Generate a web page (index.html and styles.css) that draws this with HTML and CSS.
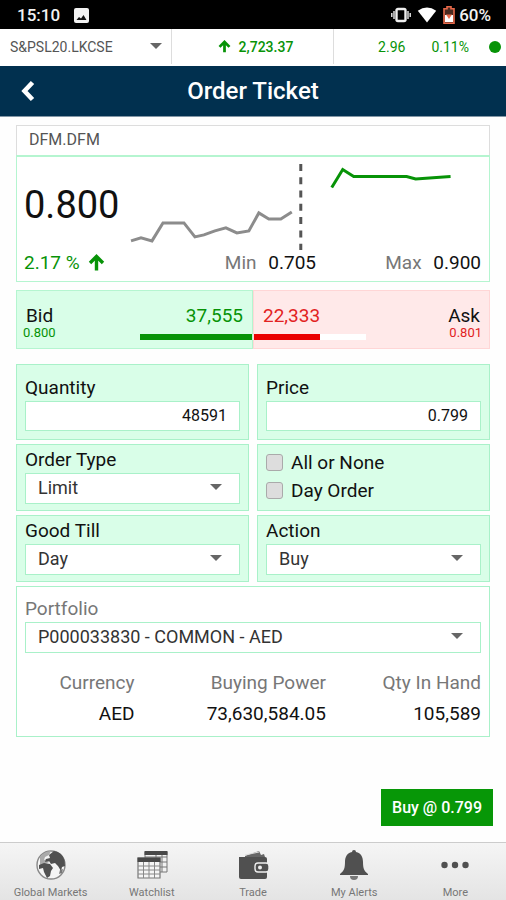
FILE: index.html
```html
<!DOCTYPE html>
<html lang="en">
<head>
<meta charset="utf-8">
<meta name="viewport" content="width=device-width, initial-scale=1">
<title>Order Ticket</title>
<link rel="stylesheet" href="styles.css">
</head>
<body>
<div class="status">
  <span class="clock">15:10</span>
  <svg class="status-photo" width="15" height="15" viewBox="0 0 15 15"><rect width="15" height="15" rx="2" fill="#f2f2f2"/><path d="M2.500 12l2.500-3 2 1.500 2.500-3.500 3 5z" fill="#111"/></svg>
  <span class="status-icons">
    <svg width="20" height="16" viewBox="0 0 20 16"><rect x="5.500" y="2" width="9" height="12" rx="1.500" fill="none" stroke="#eee" stroke-width="2.400"/><path d="M3 4v8M17 4v8M.8 6v4M19.200 6v4" stroke="#ddd" stroke-width="1.500"/></svg>
    <svg width="20" height="16" viewBox="0 0 20 16"><path d="M10 15.500L.8 3.800Q10-2.600 19.200 3.800z" fill="#fff"/></svg>
    <svg width="12" height="18" viewBox="0 0 12 18"><path d="M4 .8h4v2h3v14.400H1V2.800h3z" fill="#4a2a20" stroke="#e8694a" stroke-width="1.600"/><path d="M2 9h8v7H2z" fill="#fff"/><path d="M3 8.500h6L6 13z" fill="#e8694a"/></svg>
    <span class="battery">60%</span>
  </span>
</div>

<div class="ticker">
  <div class="pick pick-plain">
    <select aria-label="Index"><option>S&amp;PSL20.LKCSE</option></select>
  </div>
  <div class="ticker-value">
    <svg width="13" height="13" viewBox="0 0 17 17"><path d="M8.500 16V3M2 9l6.500-6.500L15 9" fill="none" stroke="#079307" stroke-width="3.600"/></svg>
    <span>2,723.37</span>
  </div>
  <div class="ticker-change"><span>2.96</span><span>0.11%</span><i class="dot"></i></div>
</div>

<header class="bar">
  <button class="back" aria-label="Back"><svg width="16" height="22" viewBox="0 0 16 22"><path d="M12.500 2.500L4.500 11l8 8.500" fill="none" stroke="#fff" stroke-width="4.600"/></svg></button>
  <h1>Order Ticket</h1>
</header>

<main>
  <div class="symbol">DFM.DFM</div>
  <section class="quote">
    <div class="quote-top">
      <strong class="last">0.800</strong>
      <svg class="chart" viewBox="0 0 351 90" role="img" aria-label="Price chart">
        <path d="M1 81l10-3 11 3 11-18h21l11 14 9-2 11-4 11-3 11 5 12-2 10-18 10 6h12l11-7" fill="none" stroke="#8c8c8c" stroke-width="3"/>
        <path d="M171 4v86" stroke="#555" stroke-width="3" stroke-dasharray="7 6.300"/>
        <path d="M202 27.500l11-18 11 7h53l9 2.500 35-2.500" fill="none" stroke="#079307" stroke-width="3"/>
      </svg>
    </div>
    <div class="stats">
      <span class="pct">2.17 % <svg width="17" height="17" viewBox="0 0 17 17"><path d="M8.500 16.500V3M2 9l6.500-6.500L15 9" fill="none" stroke="#079307" stroke-width="3.400"/></svg></span>
      <span class="stat">Min <b>0.705</b></span>
      <span class="stat">Max <b>0.900</b></span>
    </div>
  </section>

  <section class="depth">
    <div class="side bid">
      <div class="depth-line"><span>Bid</span><span class="volume">37,555</span></div>
      <div class="depth-line small"><span class="level">0.800</span><span class="meter"><i style="width:100%"></i></span></div>
    </div>
    <div class="side ask">
      <div class="depth-line"><span class="volume">22,333</span><span>Ask</span></div>
      <div class="depth-line small"><span class="meter"><i style="width:59%"></i></span><span class="level">0.801</span></div>
    </div>
  </section>

  <form class="order">
    <div class="cell tall"><label for="qty">Quantity</label><input id="qty" type="text" value="48591"></div>
    <div class="cell tall"><label for="price">Price</label><input id="price" type="text" value="0.799"></div>
    <div class="cell"><label for="type">Order Type</label><div class="pick"><select id="type"><option>Limit</option></select></div></div>
    <div class="cell checks">
      <label><input type="checkbox">All or None</label>
      <label><input type="checkbox">Day Order</label>
    </div>
    <div class="cell"><label for="till">Good Till</label><div class="pick"><select id="till"><option>Day</option></select></div></div>
    <div class="cell"><label for="action">Action</label><div class="pick"><select id="action"><option>Buy</option></select></div></div>
  </form>

  <section class="portfolio">
    <label for="portfolio">Portfolio</label>
    <div class="pick"><select id="portfolio"><option>P000033830 - COMMON - AED</option></select></div>
    <table>
      <thead><tr><th>Currency</th><th>Buying Power</th><th>Qty In Hand</th></tr></thead>
      <tbody><tr><td>AED</td><td>73,630,584.05</td><td>105,589</td></tr></tbody>
    </table>
  </section>
</main>
<button class="submit">Buy @ 0.799</button>

<nav class="tabs">
  <a href="#markets">
    <svg width="32" height="32" viewBox="0 0 32 32"><circle cx="16" cy="16" r="14" fill="#f4f4f4" stroke="#888" stroke-width="1.400"/><path d="M5 8Q9 2.500 16 2l-2 4-4 2-1 3 4-1 1 3-4 2-5 1z" fill="#aaa"/><path d="M14 6l5-4q8 1 10.500 9l.5 6-3 1-1 4-3-5-3-3-4 1-2-3-4 1 1-3 4-1z" fill="#505050"/><path d="M4 16l5-2 6 1 3 4-2 3-1 5-3 2-3-6-1-4-4 1z" fill="#505050"/><path d="M25 21l3-1-1 4-3 1z" fill="#777"/></svg>
    Global Markets</a>
  <a href="#watchlist">
    <svg width="32" height="32" viewBox="0 0 32 32"><path d="M9 3h22v20H9z" fill="#f2f2f2" stroke="#777"/><path d="M9 8h22M9 13h22M9 18h22M20 3v20M26 3v20" stroke="#777"/><path d="M8.500 2h23v4h-23z" fill="#484848"/><path d="M2 9h22v20H2z" fill="#f5f5f5" stroke="#777" stroke-width="1.200"/><path d="M2 17h22M2 21h22M2 25h22M7.500 12v17M13 12v17M18.500 12v17" stroke="#888"/><path d="M1.500 8.500h23v4.500h-23z" fill="#484848"/></svg>
    Watchlist</a>
  <a href="#trade">
    <svg width="32" height="32" viewBox="0 0 32 32"><path d="M8 7l14-5 2 4 3-1 1 3H8z" fill="#666"/><path d="M8 6l14-3" stroke="#ddd"/><path d="M2 8h26a2 2 0 0 1 2 2v18a2 2 0 0 1-2 2H4a2 2 0 0 1-2-2z" fill="#505050"/><rect x="18" y="14" width="14" height="9" rx="3" fill="#505050" stroke="#eee" stroke-width="1.400"/><circle cx="23" cy="18.500" r="2" fill="#eee"/></svg>
    Trade</a>
  <a href="#alerts">
    <svg width="32" height="32" viewBox="0 0 32 32"><path d="M16 1a2 2 0 0 1 2 2c5 1 7 5 7 10 0 6 1 9 5 12v1H2v-1c4-3 5-6 5-12 0-5 2-9 7-10a2 2 0 0 1 2-2z" fill="#505050"/><path d="M12 27h8a4 4 0 0 1-8 0z" fill="#777"/></svg>
    My Alerts</a>
  <a href="#more">
    <svg width="32" height="32" viewBox="0 0 32 32"><g fill="#505050"><circle cx="5.500" cy="16" r="3.200"/><circle cx="16" cy="16" r="3.200"/><circle cx="26.500" cy="16" r="3.200"/></g></svg>
    More</a>
</nav>
</body>
</html>
```
FILE: styles.css
```css
* { box-sizing: border-box; }

body {
  margin: 0;
  min-height: 100vh;
  display: flex;
  flex-direction: column;
  background: #fefefe;
  color: #111;
  font: 19px/24px Roboto, sans-serif;
}

svg { display: block; }
input, select, button { font: inherit; color: inherit; margin: 0; border-radius: 0; }

.status {
  display: flex;
  align-items: center;
  height: 29px;
  padding: 1px 15px 0 17px;
  background: #000;
  color: #f2f2f2;
  font-size: 17px;
  font-weight: 500;
}
.status-photo { margin-left: 14px; }
.status-icons { display: flex; align-items: center; gap: 6px; margin-left: auto; }
.battery { margin-left: -2px; }

.ticker {
  display: grid;
  grid-template-columns: 34% 32% 34%;
  height: 37px;
  padding-bottom: 2px;
  background: #fff;
  color: #079307;
  font-size: 14px;
}
.ticker > div { display: flex; align-items: center; border-right: 1px solid #ddd; }
.ticker > div:last-child { border: 0; }
.ticker-value { justify-content: center; gap: 8px; padding-left: 6px; font-weight: 500; }
.ticker .ticker-change { justify-content: flex-end; gap: 26px; padding-right: 5px; }
.dot { width: 12px; height: 12px; margin-left: -6px; border-radius: 50%; background: #079307; }

.bar {
  display: grid;
  grid-template-columns: 56px 1fr 56px;
  align-items: center;
  height: 51px;
  background: #01304f;
  border-bottom: 1px solid #8296a6;
  color: #fff;
}
.bar h1 { margin: 0; text-align: center; font-size: 24px; font-weight: 500; }
.back { display: flex; padding: 0 20px; border: 0; background: none; }

main { padding: 8px 16px 0; }

.symbol {
  height: 30px;
  padding: 2px 12px;
  border: 1px solid #ddd;
  border-bottom: 0;
  background: #fff;
  color: #555;
  font-size: 16px;
}

.quote {
  padding: 3px 8px 6px 7px;
  border: 1px solid #b5f5d0;
  border-top-width: 2px;
  background: #fff;
}
.quote-top { display: flex; align-items: center; gap: 11px; }
.last { font-size: 38px; font-weight: 400; line-height: 44px; }
.chart { flex: 1; min-width: 0; }
.stats { display: grid; grid-template-columns: 1fr 2fr 165px; align-items: center; margin-top: 1px; text-align: right; }
.pct { display: flex; align-items: center; gap: 8px; color: #079307; white-space: nowrap; }
.stat { color: #777; }
.stat b { margin-left: 7px; color: #111; font-weight: 400; }

.depth { display: grid; grid-template-columns: 1fr 1fr; margin-top: 8px; }
.side { height: 59px; padding-top: 14px; border: 1px solid #b5f5d0; background: #d9fee8; }
.ask { border-color: #ffd6d6; background: #ffe9e9; }
.depth-line { display: flex; justify-content: space-between; padding: 0 9px; line-height: 21px; }
.depth-line.small { align-items: center; height: 14px; font-size: 13px; line-height: 14px; }
.bid .small { padding: 0 0 0 6px; }
.ask .small { padding: 0 7px 0 0; }
.bid .volume, .bid .level { color: #079307; }
.ask .volume, .ask .level { color: #e22222; }
.meter { width: 112px; height: 6px; margin-top: 8px; background: #fff; }
.meter i { display: block; height: 100%; background: #079307; }
.ask .meter i { background: #ea0000; }

.order { display: grid; grid-template-columns: 1fr 1fr; gap: 4px 8px; margin-top: 15px; }
.cell { padding: 2px 8px 6px; border: 1px solid #a9f1c9; background: #d9fee8; }
.cell > label { display: block; line-height: 26px; }
.cell.tall { padding-top: 10px; padding-bottom: 8px; }
.cell > input {
  display: block;
  width: 100%;
  height: 30px;
  padding: 0 12px;
  border: 1px solid #a9f1c9;
  background: #fff;
  text-align: right;
  font-size: 16px;
}

.pick { position: relative; }
.pick select {
  display: block;
  width: 100%;
  height: 31px;
  padding: 0 32px 0 12px;
  border: 1px solid #a9f1c9;
  background: #fff;
  color: #333;
  font-size: 18px;
  appearance: none;
}
.pick::after {
  content: "";
  position: absolute;
  right: 18px;
  top: 50%;
  margin-top: -4px;
  border: solid transparent;
  border-width: 6px 6px 0;
  border-top-color: #666;
  pointer-events: none;
}
.pick.pick-plain select { padding-left: 10px; border: 0; color: #555; font-size: 14px; }
.pick-plain::after { right: 9px; }

.cell.checks { padding-top: 4px; padding-bottom: 5px; }
.cell.checks > label { display: flex; align-items: center; gap: 8px; height: 28px; }
.checks input {
  width: 17px;
  height: 17px;
  border: 1px solid #aaa;
  border-radius: 3px;
  background: #ddd;
  appearance: none;
}

.portfolio { margin-top: 4px; padding: 9px 8px 7px; border: 1px solid #a9f1c9; background: #fff; }
.portfolio > label { display: block; color: #777; line-height: 26px; }
table { width: 100%; margin-top: 14px; border-collapse: collapse; text-align: right; }
th, td { padding: 0; font-weight: 400; line-height: 31px; }
th { color: #777; }
th:first-child { width: 24%; }
th:nth-child(2) { width: 42%; }

.submit {
  margin: auto 13px 16px auto;
  height: 37px;
  padding: 0 11px;
  border: 0;
  background: #079707;
  color: #fff;
  font-size: 16px;
  font-weight: 500;
}

.tabs {
  display: grid;
  grid-template-columns: repeat(5, 1fr);
  height: 58px;
  padding-top: 6px;
  border-top: 1px solid #ccc;
  background: linear-gradient(#f5f5f5, #e4e4e4);
}
.tabs a {
  display: flex;
  flex-direction: column;
  align-items: center;
  gap: 4px;
  color: #777;
  font-size: 11px;
  line-height: 16px;
  text-decoration: none;
}
```
